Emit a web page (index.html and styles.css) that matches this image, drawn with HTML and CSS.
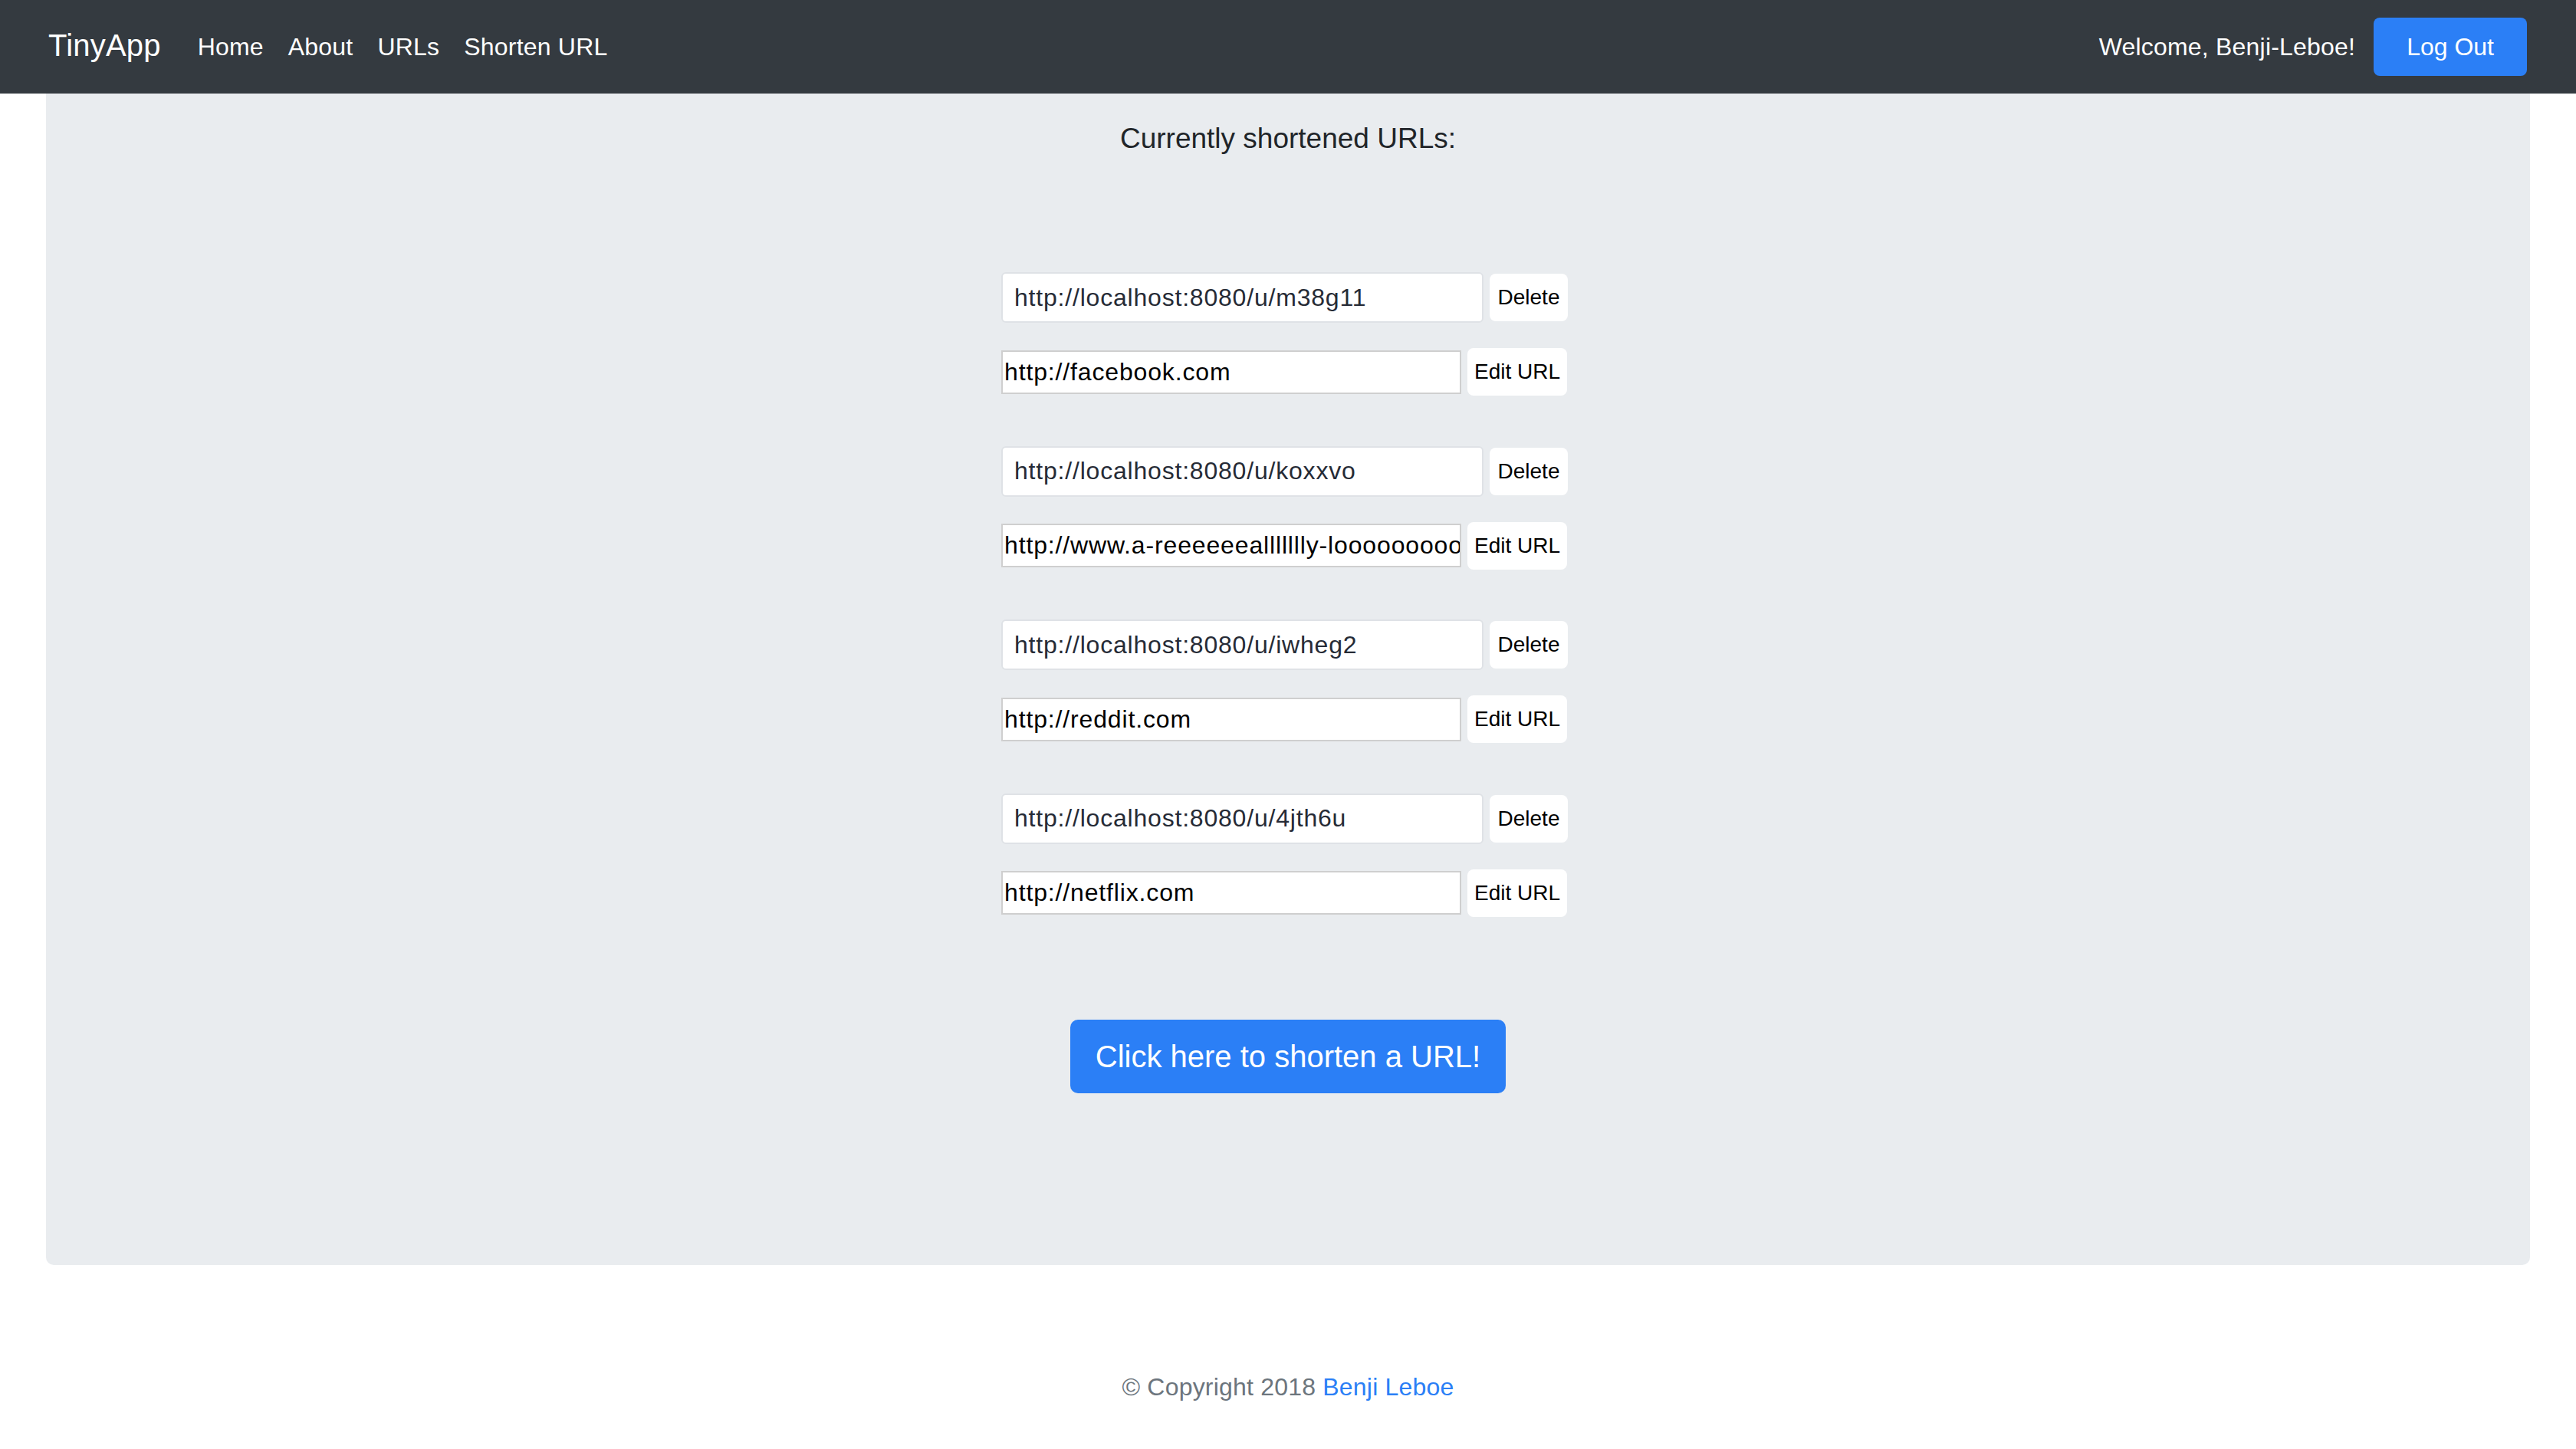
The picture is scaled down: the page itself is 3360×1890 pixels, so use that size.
FILE: index.html
```html
<!DOCTYPE html>
<html lang="en">
<head>
<meta charset="utf-8">
<title>TinyApp</title>
<link rel="stylesheet" href="styles.css">
</head>
<body>
<nav class="navbar">
  <a class="brand" href="#">TinyApp</a>
  <ul class="nav-links">
    <li><a href="#">Home</a></li>
    <li><a href="#">About</a></li>
    <li><a href="#">URLs</a></li>
    <li><a href="#">Shorten URL</a></li>
  </ul>
  <div class="nav-right">
    <span class="welcome">Welcome, Benji-Leboe!</span>
    <button class="btn-logout" type="button">Log Out</button>
  </div>
</nav>

<main class="jumbotron">
  <p class="lead">Currently shortened URLs:</p>
  <div class="url-list">
    <div class="url-group">
      <form class="row-short">
        <input class="short-input" type="text" value="http://localhost:8080/u/m38g11" readonly>
        <button class="btn-plain btn-delete" type="button">Delete</button>
      </form>
      <form class="row-long">
        <input class="long-input" type="text" value="http://facebook.com">
        <button class="btn-plain btn-edit" type="button">Edit URL</button>
      </form>
    </div>
    <div class="url-group">
      <form class="row-short">
        <input class="short-input" type="text" value="http://localhost:8080/u/koxxvo" readonly>
        <button class="btn-plain btn-delete" type="button">Delete</button>
      </form>
      <form class="row-long">
        <input class="long-input" type="text" value="http://www.a-reeeeeeallllllly-looooooooooong-url.com">
        <button class="btn-plain btn-edit" type="button">Edit URL</button>
      </form>
    </div>
    <div class="url-group">
      <form class="row-short">
        <input class="short-input" type="text" value="http://localhost:8080/u/iwheg2" readonly>
        <button class="btn-plain btn-delete" type="button">Delete</button>
      </form>
      <form class="row-long">
        <input class="long-input" type="text" value="http://reddit.com">
        <button class="btn-plain btn-edit" type="button">Edit URL</button>
      </form>
    </div>
    <div class="url-group">
      <form class="row-short">
        <input class="short-input" type="text" value="http://localhost:8080/u/4jth6u" readonly>
        <button class="btn-plain btn-delete" type="button">Delete</button>
      </form>
      <form class="row-long">
        <input class="long-input" type="text" value="http://netflix.com">
        <button class="btn-plain btn-edit" type="button">Edit URL</button>
      </form>
    </div>
  </div>
  <div class="cta-wrap">
    <a class="btn-cta" href="#">Click here to shorten a URL!</a>
  </div>
</main>

<footer class="footer">
  <span>© Copyright 2018 <a href="#">Benji Leboe</a></span>
</footer>
</body>
</html>
```

FILE: styles.css
```css
* {
  box-sizing: border-box;
}

html, body {
  margin: 0;
  padding: 0;
  background: #ffffff;
}

body {
  font-family: "Liberation Sans", Arial, sans-serif;
  color: #212529;
  width: 3360px;
  min-height: 1890px;
}

/* ---------- navbar ---------- */
.navbar {
  display: flex;
  align-items: center;
  height: 122px;
  padding: 0 64px 0 63px;
  background: #343a40;
}

.brand {
  font-size: 40px;
  line-height: 40px;
  letter-spacing: 0.2px;
  color: #ffffff;
  text-decoration: none;
  margin-right: 32px;
  margin-bottom: 4px;
}

.nav-links {
  display: flex;
  list-style: none;
  margin: 0;
  padding: 0;
}

.nav-links a {
  display: block;
  padding: 0 16px;
  font-size: 32px;
  line-height: 32px;
  letter-spacing: 0.2px;
  color: #ffffff;
  text-decoration: none;
}

.nav-right {
  margin-left: auto;
  display: flex;
  align-items: center;
}

.welcome {
  font-size: 32px;
  line-height: 32px;
  letter-spacing: 0.2px;
  color: #ffffff;
}

.btn-logout {
  margin-left: 24px;
  height: 76px;
  padding: 0 43px;
  font-family: inherit;
  font-size: 32px;
  color: #ffffff;
  background: #2b7ff6;
  border: none;
  border-radius: 8px;
}

/* ---------- jumbotron ---------- */
.jumbotron {
  margin: 0 60px;
  padding: 40px 0 224px;
  background: #e9ecef;
  border-radius: 0 0 10px 10px;
}

.lead {
  margin: 0;
  text-align: center;
  font-size: 37px;
  line-height: 37px;
  color: #212529;
}

.url-list {
  width: 748px;
  margin: 156px auto 0;
}

.url-group + .url-group {
  margin-top: 65.5px;
}

.row-short,
.row-long {
  display: flex;
  align-items: center;
  gap: 8px;
  margin: 0;
}

.row-short {
  height: 66px;
}

.row-long {
  height: 62px;
  margin-top: 33px;
}

.short-input {
  width: 629px;
  height: 66px;
  padding: 0 0 0 15px;
  font-family: inherit;
  font-size: 32px;
  letter-spacing: 0.8px;
  color: #262b36;
  background: #ffffff;
  border: 2px solid #dfe2e6;
  border-radius: 6px;
  outline: none;
}

.long-input {
  width: 600px;
  height: 57px;
  padding: 0 0 0 2px;
  font-family: inherit;
  font-size: 32px;
  letter-spacing: 0.85px;
  color: #000000;
  background: #ffffff;
  border: 2px solid #cfcfcf;
  border-radius: 0;
  outline: none;
}

.btn-plain {
  height: 62px;
  padding: 0;
  font-family: inherit;
  font-size: 28px;
  color: #000000;
  background: #ffffff;
  border: none;
  border-radius: 8px;
}

.btn-delete {
  width: 102px;
}

.btn-edit {
  width: 130px;
}

.cta-wrap {
  display: flex;
  justify-content: center;
  margin-top: 134.5px;
}

.btn-cta {
  display: flex;
  align-items: center;
  justify-content: center;
  width: 568px;
  height: 96px;
  font-size: 40px;
  color: #ffffff;
  text-decoration: none;
  background: #2b7ff6;
  border-radius: 10px;
}

/* ---------- footer ---------- */
.footer {
  margin-top: 143px;
  text-align: center;
  font-size: 32px;
  line-height: 32px;
  letter-spacing: 0.2px;
  color: #6c757d;
}

.footer a {
  color: #2b7ff6;
  text-decoration: none;
}
```
